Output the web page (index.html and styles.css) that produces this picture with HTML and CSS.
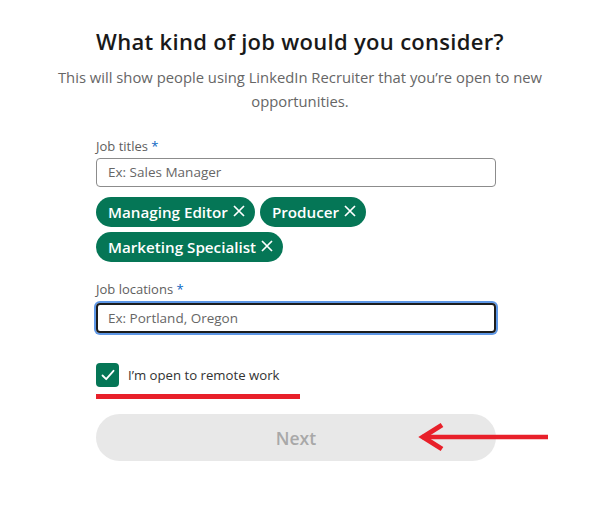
FILE: index.html
```html
<!DOCTYPE html>
<html>
<head>
<meta charset="utf-8">
<link rel="stylesheet" href="styles.css">
</head>
<body>
<main class="page">
  <h1 class="title">What kind of job would you consider?</h1>
  <p class="subtitle">This will show people using LinkedIn Recruiter that you’re open to new opportunities.</p>
  <form class="form">
    <label class="label">Job titles <span class="req">*</span></label>
    <div class="input">Ex: Sales Manager</div>
    <div class="chips">
      <span class="chip">Managing Editor <span class="x"><svg width="12" height="12" viewBox="0 0 12 12"><path d="M1 1 L11 11 M11 1 L1 11" stroke="#fff" stroke-width="1.7"/></svg></span></span>
      <span class="chip">Producer <span class="x"><svg width="12" height="12" viewBox="0 0 12 12"><path d="M1 1 L11 11 M11 1 L1 11" stroke="#fff" stroke-width="1.7"/></svg></span></span>
      <span class="chip">Marketing Specialist <span class="x"><svg width="12" height="12" viewBox="0 0 12 12"><path d="M1 1 L11 11 M11 1 L1 11" stroke="#fff" stroke-width="1.7"/></svg></span></span>
    </div>
    <label class="label label-loc">Job locations <span class="req">*</span></label>
    <div class="input input-focus">Ex: Portland, Oregon</div>
    <div class="check-row">
      <span class="checkbox">
        <svg width="16" height="16" viewBox="0 0 16 16"><path d="M2.5 8.5 L6.2 12.2 L13.5 3.8" fill="none" stroke="#fff" stroke-width="1.8" stroke-linecap="round" stroke-linejoin="round"/></svg>
      </span>
      <span class="check-text">I’m open to remote work</span>
    </div>
    <div class="underline"></div>
    <div class="btn-row">
      <button type="button" class="next">Next</button>
      <svg class="arrow" width="134" height="30" viewBox="0 0 134 30"><path d="M4 15 H130" stroke="#e8202a" stroke-width="4.5"/><path d="M24 3 L5 15 L24 27" fill="none" stroke="#e8202a" stroke-width="5"/></svg>
    </div>
  </form>
</main>
</body>
</html>
```
FILE: styles.css
```css
* { box-sizing: border-box; }
body {
  margin: 0;
  background: #fff;
  font-family: "Open Sans", "Noto Sans", sans-serif;
  color: #1d1d1d;
}
.page {
  width: 600px;
  padding-top: 26px;
  display: flex;
  flex-direction: column;
  align-items: center;
}
.title {
  margin: 0;
  font-size: 22px;
  line-height: 30px;
  font-weight: 600;
  color: #191919;
  letter-spacing: 0.3px;
}
.subtitle {
  margin: 9px 0 0;
  width: 500px;
  text-align: center;
  font-size: 14.8px;
  line-height: 24px;
  color: #666;
}
.form {
  width: 400px;
  margin-left: -8px;
  margin-top: 24px;
  display: flex;
  flex-direction: column;
}
.label {
  font-size: 13px;
  line-height: 18px;
  color: #5e5e5e;
}
.req { color: #0a66c2; }
.input {
  margin-top: 3px;
  height: 29px;
  border: 1px solid #8c8c8c;
  border-radius: 4px;
  padding: 0 11px;
  font-size: 13.5px;
  line-height: 27px;
  color: #666;
}
.chips {
  margin-top: 10px;
  display: flex;
  flex-wrap: wrap;
  gap: 5px 5px;
  width: 300px;
}
.chip {
  height: 30px;
  border-radius: 15px;
  background: #057656;
  color: #fff;
  font-weight: 600;
  font-size: 15.2px;
  line-height: 30px;
  padding: 0 10px 0 12px;
  white-space: nowrap;
  display: flex;
  align-items: center;
  gap: 5px;
}
.x { display: flex; margin-top: -3px; }
.x svg { display: block; }
.label-loc { margin-top: 18px; }
.input-focus {
  margin-top: 5px;
  height: 30px;
  border: 2px solid #1d1d1d;
  box-shadow: 0 0 0 2px #5e97e6;
  border-radius: 4px;
  padding: 0 10px;
  line-height: 26px;
}
.check-row {
  margin-top: 30px;
  display: flex;
  align-items: center;
  gap: 9px;
}
.checkbox {
  width: 23px;
  height: 24px;
  border-radius: 4px;
  background: #057656;
  display: flex;
  align-items: center;
  justify-content: center;
}
.check-text {
  font-size: 13.2px;
  color: #333;
}
.underline {
  margin-top: 7px;
  width: 204px;
  height: 5px;
  background: #e8202a;
}
.btn-row {
  margin-top: 15px;
  position: relative;
  width: 400px;
}
.next {
  width: 400px;
  height: 47px;
  border: 0;
  border-radius: 24px;
  background: #e8e8e8;
  color: #a8a8a8;
  font-family: inherit;
  font-weight: 600;
  font-size: 17.5px;
}
.arrow {
  position: absolute;
  left: 322px;
  top: 8px;
}
```
